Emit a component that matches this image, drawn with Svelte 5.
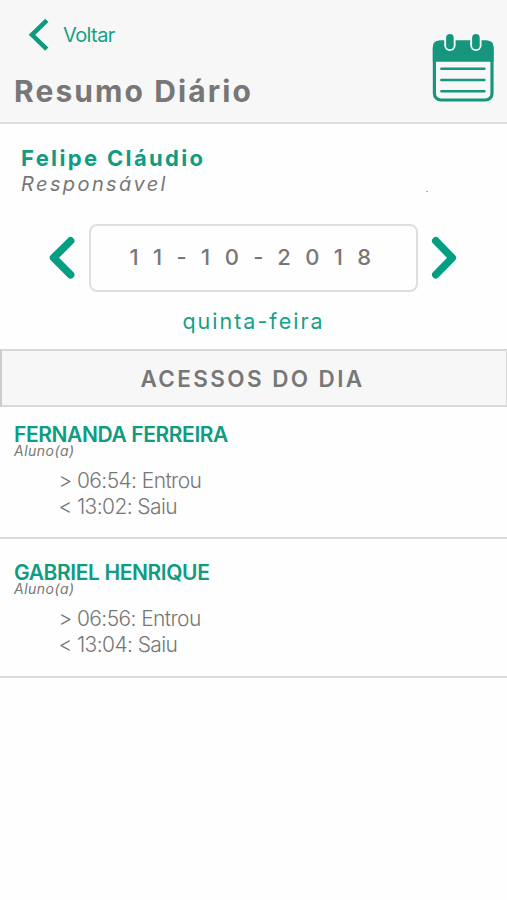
<script lang="ts">
	let date = '11-10-2018'
	let weekday = 'quinta-feira'

	let students = [
		{
			name: 'FERNANDA FERREIRA',
			role: 'Aluno(a)',
			accesses: ['> 06:54: Entrou', '< 13:02: Saiu']
		},
		{
			name: 'GABRIEL HENRIQUE',
			role: 'Aluno(a)',
			accesses: ['> 06:56: Entrou', '< 13:04: Saiu']
		}
	]
</script>

<svelte:head>
	<title>Resumo Diário</title>
</svelte:head>

<main>
	<header>
		<div class="heading">
			<div class="back">
				<svg width="22" height="34" viewBox="0 0 22 34">
					<path d="M19.8 2.4 L5 16.8 L19.8 31.2" fill="none" stroke="#0a9b80" stroke-width="4.6" />
				</svg>
				<span>Voltar</span>
			</div>
			<h1>Resumo Diário</h1>
		</div>
		<svg class="calendar" width="62" height="70" viewBox="0 0 62 70">
			<rect x="2.4" y="9" width="57.6" height="58" rx="6.5" fill="none" stroke="#16967d" stroke-width="3.2" />
			<path d="M0.8 28.8 V14.2 Q0.8 7.6 7.4 7.6 H55 Q61.6 7.6 61.6 14.2 V28.8 Z" fill="#16967d" />
			<rect x="12.2" y="-0.8" width="11.4" height="18.8" rx="5.7" fill="#f7f7f7" />
			<rect x="38.2" y="-0.8" width="11.4" height="18.8" rx="5.7" fill="#f7f7f7" />
			<rect x="14.1" y="1" width="7.6" height="15.2" rx="3.8" fill="#16967d" />
			<rect x="40.1" y="1" width="7.6" height="15.2" rx="3.8" fill="#16967d" />
			<path d="M9.4 35.8 H52.4 M9.4 47 H52.4 M9.4 58.2 H52.4" stroke="#16967d" stroke-width="2.6" stroke-linecap="round" />
		</svg>
	</header>

	<section class="guardian">
		<div>
			<h2>Felipe Cláudio</h2>
			<p>Responsável</p>
		</div>
		<i class="dot"></i>
	</section>

	<section class="day">
		<svg class="arrow" width="28" height="44" viewBox="0 0 28 44">
			<path d="M22.6 4.9 L5.6 21.8 L22.6 38.7" />
		</svg>
		<div class="date">{date}</div>
		<svg class="arrow" width="28" height="44" viewBox="0 0 28 44">
			<path d="M4.8 4.9 L21.3 21.8 L4.8 38.7" />
		</svg>
	</section>
	<p class="weekday">{weekday}</p>

	<h3>ACESSOS DO DIA</h3>

	{#each students as student}
		<article>
			<h4>{student.name}</h4>
			<p class="role">{student.role}</p>
			<ul>
				{#each student.accesses as access}
					<li>{access}</li>
				{/each}
			</ul>
		</article>
	{/each}
</main>

<style>
	:global(body) {
		margin: 0;
		background-color: #fefefe;
	}

	main {
		min-height: 900px;
		font-family: Inter, 'Liberation Sans', sans-serif;
		color: #777;
		background-color: #fefefe;
	}

	h1,
	h2,
	h3,
	h4,
	p,
	ul {
		margin: 0;
		padding: 0;
		white-space: nowrap;
	}

	svg {
		display: block;
		flex: none;
	}

	header {
		display: flex;
		justify-content: space-between;
		box-sizing: border-box;
		height: 124px;
		padding: 17px 13px 0 14px;
		background-color: #f7f7f7;
		border-bottom: 2px solid #dedede;
	}

	.back {
		display: flex;
		align-items: center;
		gap: 14px;
		height: 35px;
		padding-left: 13px;
		font-size: 20px;
		letter-spacing: -0.6px;
		color: #16a085;
	}

	h1 {
		margin-top: 19px;
		font-size: 30px;
		line-height: 40px;
		font-weight: 700;
		letter-spacing: 2.1px;
	}

	.calendar {
		margin-top: 16px;
	}

	.guardian {
		display: flex;
		justify-content: space-between;
		height: 76px;
		padding: 21px 79px 0 21px;
	}

	h2 {
		font-size: 22px;
		line-height: 26px;
		font-weight: 700;
		letter-spacing: 2.35px;
		color: #0f9c81;
	}

	.guardian p {
		font-size: 20px;
		line-height: 26px;
		font-style: italic;
		letter-spacing: 2.4px;
	}

	.dot {
		width: 2px;
		height: 1px;
		margin-top: 46px;
		background-color: #aaa;
	}

	.day {
		display: flex;
		align-items: center;
		justify-content: center;
		gap: 13px;
		margin-top: 3px;
	}

	.arrow {
		fill: none;
		stroke: #049f83;
		stroke-width: 7.6;
		stroke-linecap: round;
		stroke-linejoin: round;
	}

	.date {
		box-sizing: border-box;
		width: 329px;
		height: 68px;
		padding-left: 8px;
		border: 2px solid #dedede;
		border-radius: 8px;
		font-size: 22px;
		line-height: 62px;
		font-weight: 500;
		letter-spacing: 14.4px;
		text-align: center;
	}

	.weekday {
		height: 57px;
		font-size: 21.5px;
		line-height: 59px;
		letter-spacing: 2px;
		text-align: center;
		color: #16a085;
	}

	h3 {
		box-sizing: border-box;
		height: 58px;
		padding-right: 3px;
		border: 2px solid #d8d8d8;
		border-left-color: #ccc;
		border-right-width: 1px;
		background-color: #f7f7f7;
		font-size: 22.5px;
		line-height: 55px;
		font-weight: 600;
		letter-spacing: 2.4px;
		text-align: center;
	}

	article {
		box-sizing: border-box;
		height: 132px;
		padding: 15px 14px 0;
		border-bottom: 2px solid #dcdcdc;
	}

	article + article {
		height: 139px;
		padding-top: 21px;
	}

	h4 {
		font-size: 21px;
		line-height: 26px;
		font-weight: 600;
		letter-spacing: -0.4px;
		color: #0f9c81;
	}

	.role {
		margin-top: -1px;
		font-size: 14px;
		line-height: 8px;
		font-style: italic;
		letter-spacing: 0.5px;
	}

	ul {
		padding: 13px 0 0 44.5px;
		list-style: none;
		font-size: 21px;
		line-height: 26px;
		font-weight: 300;
		letter-spacing: -0.6px;
	}
</style>
